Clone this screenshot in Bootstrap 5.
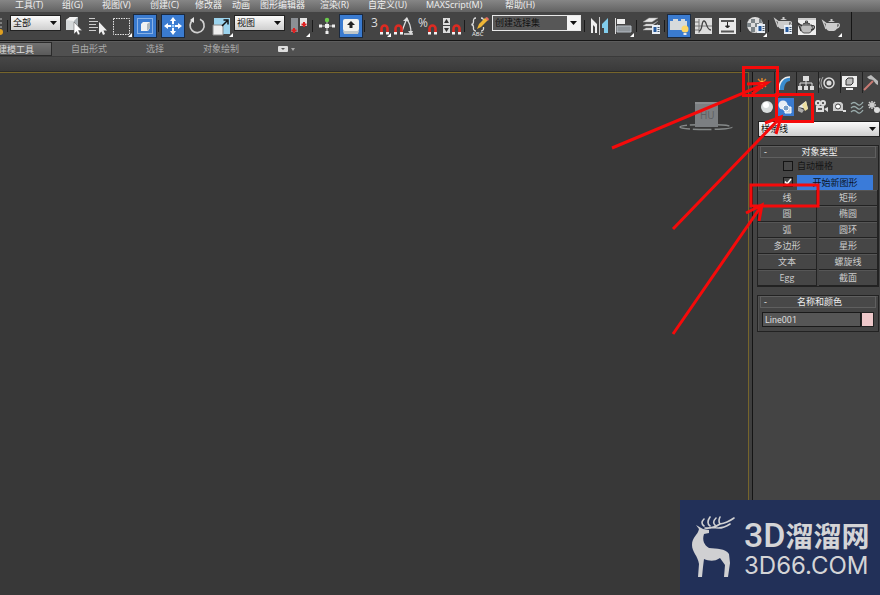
<!DOCTYPE html>
<html lang="zh-CN">
<head>
<meta charset="utf-8">
<meta name="viewport" content="width=device-width, initial-scale=1">
<title>3D</title>
<link href="https://cdn.jsdelivr.net/npm/bootstrap@5.3.0/dist/css/bootstrap.min.css" rel="stylesheet">
<script src="https://cdn.jsdelivr.net/npm/bootstrap@5.3.0/dist/js/bootstrap.bundle.min.js"></script>
<style>
body{font:9px/12px "Open Sans","Noto Sans CJK SC",sans-serif;background:#383838;color:#ddd}
a{color:inherit;text-decoration:none}
button,select,input{font:inherit;color:inherit}
.menu-bar{display:grid;grid-template-columns:47px 40px 48px 45px 37px 28px 60px 48px 58px 79px 1fr;height:12px;padding-left:15px;background:linear-gradient(#868686,#626262);color:#f0f0f0;white-space:nowrap}
.menu-bar a{line-height:10px;height:12px}
.tool-bar{height:29px;background:#444;border-bottom:1px solid #161616;overflow:hidden}
.tool-inner{width:852px;border-right:1px solid #161616;height:28px}
.tool{width:24px;height:24px;padding:0;border:0;background:none;flex:none;display:block}
.tool svg,.ptab svg,.cat svg{display:block}
.tool.on{background:#3a7bd0;box-shadow:inset 0 0 0 1px #1b2a40}
.vsep{width:4px;height:12px;flex:none;background:linear-gradient(90deg,transparent 1px,#1b1b1b 1px,#1b1b1b 2px,transparent 2px)}
.edge{width:6px;height:24px;flex:none}
.pick{appearance:none;height:16px;padding:0 0 0 2px;border:1px solid #222;border-radius:0;color:#111;line-height:12px;background:url("data:image/svg+xml,%3Csvg xmlns='http://www.w3.org/2000/svg' width='7' height='4'%3E%3Cpath d='M0 0h7L3.500 4z' fill='%23111'/%3E%3C/svg%3E") no-repeat right 3px center,linear-gradient(#fafafa,#cfcfcf)}
.tool-inner .pick{width:51px;margin:0 2px 7px 1px;flex:none}
.tool-inner .first{margin:0 0 7px}
.tool-inner .sets{width:89px;border:1px solid #e8e8e8;background:url("data:image/svg+xml,%3Csvg xmlns='http://www.w3.org/2000/svg' width='7' height='4'%3E%3Cpath d='M0 0h7L3.500 4z' fill='%23111'/%3E%3C/svg%3E") no-repeat right 3px center,linear-gradient(90deg,#575757 74px,#f4f4f4 74px)}
.ribbon{height:16px;background:#505050;border-top:1px solid #5c5c5c;border-bottom:1px solid #3a3a3a;color:#aaa;white-space:nowrap}
.ribbon a{width:66px;text-align:center;line-height:14px}
.ribbon .current{width:52px;background:linear-gradient(#727272,#5a5a5a);border:1px solid #2a2a2a;border-left:0;color:#ddd;text-align:left;overflow:hidden;display:flex;justify-content:flex-end;padding-right:17px;line-height:13px}
.ribbon-foot{height:15px;background:linear-gradient(#474747,#3a3a3a);border-bottom:1px solid #2b2b2b}
.viewport{border:1px solid #76652b;border-width:1px 1px 0 0;background:#383838;padding:28px 14px 0 0}
.panel{width:128px;background:#444;border-left:1px solid #151515;margin-left:3px;box-shadow:-3px 0 #3f3f3f;padding-left:4px}
.ptabs{margin-left:-4px}
.ptab{width:22px;height:21px;padding:0;border:0;border-right:1px solid #222;background:none;flex:none}
.cat{width:18px;height:18px;padding:0;border:0;background:none;flex:none}
.cat.on{background:#3a7bd0}
.cats{margin:5px 0 0 1px;overflow:hidden}
.kind{width:122px;height:16px;margin:5px 0 0 1px;display:block}
.rollup{border:1px solid #222;box-shadow:inset 1px 1px #515151;margin-right:1px}
.rollup-head{height:12px;width:calc(100% - 4px);margin:0 2px;border:1px solid #5f5f5f;background:#484848;color:#eee;padding:0 3px;line-height:10px;display:flex}
.rollup-head b{flex:1;font-weight:400;text-align:center}
.tick{appearance:none;width:10px;height:10px;margin:0;border:1px solid #141414;background:#484848;flex:none}
.tick:checked{background:#484848 url("data:image/svg+xml,%3Csvg xmlns='http://www.w3.org/2000/svg' width='8' height='8'%3E%3Cpath d='M1 3.500L3 6L7 1' fill='none' stroke='%23fff' stroke-width='1.600'/%3E%3C/svg%3E") no-repeat center}
.opt{height:16px;padding-left:25px;gap:4px;color:#151515}
.start{background:#3a7bd9;border:0;padding:0;width:76px;height:15px;color:#0b1424;line-height:15px}
.shape-grid{display:grid;grid-template-columns:1fr 1fr;column-gap:2px}
.shape-grid button{height:16px;padding:0;border:1px solid #222;border-width:0 1px 1px 0;background:#464646;box-shadow:inset 0 1px #565656;color:#ccc;line-height:14px}
.obj-name{width:99px;height:15px;padding:0 2px;border:1px solid #1a1a1a;background:#565656;color:#ddd;font-family:Roboto,sans-serif}
.swatch{width:13px;height:15px;padding:0;border:1px solid #222;background:#eec8ca}
.cube{width:56px}
.marks{position:absolute;right:0;top:0;pointer-events:none}
.brand{position:absolute;right:0;bottom:0;background:#223058;color:#d4d4d6;padding:16px 8px 17px 12px;white-space:nowrap;gap:6px;width:200px}
.brand-top{font:500 34px/38px Roboto,sans-serif}
.brand-top span{font:700 28px/38px "Noto Sans CJK SC",sans-serif}
.brand-low{font:24px/24px Inter,sans-serif}
</style>
</head>
<body class="vh-100 overflow-hidden position-relative d-flex flex-column">
<nav class="menu-bar flex-shrink-0">
<a href="#">工具(T)</a><a href="#">组(G)</a><a href="#">视图(V)</a><a href="#">创建(C)</a><a href="#">修改器</a><a href="#">动画</a><a href="#">图形编辑器</a><a href="#">渲染(R)</a><a href="#">自定义(U)</a><a href="#">MAXScript(M)</a><a href="#">帮助(H)</a>
</nav>
<svg width="0" height="0" class="position-absolute" aria-hidden="true"><defs>
<g id="magnet"><path d="M1.500 10V4.500a3 3 0 0 1 6 0V10" fill="none" stroke="#dc2b22" stroke-width="2.600"/><path d="M0 8h3v2.500H0zM6 8h3v2.500H6z" fill="#f2f2f2"/></g>
<g id="pot"><path d="M4 5c-1 4 0 7 3 8h5c3-1 4-4 3-8z"/><path d="M5 6L1 3l3 8M14 6c5-2 4 4 0 4" fill="none" stroke="currentColor" stroke-width="1.300"/><path d="M6 4q3.500-3 7 0zM8.500 1h2v2h-2z"/></g>
<g id="sheet"><path d="M0 0h8v9H0z" fill="#e8eef5"/><path d="M1.500 2h3v5h-3z" fill="#24589b"/><path d="M5.500 2.500h2M5.500 4.500h2M5.500 6.500h2" stroke="#456"/></g>
</defs></svg>
<div class="tool-bar flex-shrink-0">
<div class="tool-inner d-flex align-items-center">
<svg class="edge" viewBox="0 0 6 24"><path d="M0 5h2M0 9h2M0 13h2" stroke="#bbb"/><circle cx="0" cy="18" r="3" fill="#e0a020"/></svg>
<i class="vsep"></i>
<select class="pick first" aria-label="选择过滤器"><option>全部</option></select>
<button class="tool" aria-label="选择对象"><svg viewBox="0 0 24 24"><path d="M5 6l4-3h8v9l-4 4H5z" fill="#d5d9da"/><path d="M5 6l4-3h8l-4 4z" fill="#f4f4f4"/><path d="M13 7l4-4v9l-4 4z" fill="#aab1b5"/><path d="M13 8v12l2.500-2.500L17 21l2-1-1.500-3.500H21z" fill="#fff" stroke="#555" stroke-width=".5"/></svg></button>
<button class="tool" aria-label="按名称选择"><svg viewBox="0 0 24 24"><path d="M4 4.500h6M4 7.500h9M4 10.500h7M4 13.500h9M4 16.500h7" stroke="#ccc"/><path d="M14 8v12l2.500-2.500L18 21l2-1-1.500-3.500H22z" fill="#eee"/></svg></button>
<button class="tool" aria-label="矩形选择"><svg viewBox="0 0 24 24"><path d="M4.500 4.500h16v16h-16z" fill="none" stroke="#e5e5e5" stroke-dasharray="1.500 1"/><path d="M23 19v4h-4z" fill="#fff"/></svg></button>
<button class="tool on" aria-label="窗口交叉"><svg viewBox="0 0 24 24"><path d="M4.500 4.500h15v15h-15z" fill="none" stroke="#d9ebff" stroke-dasharray="1 1"/><path d="M8 10l2-2h7v6l-2 3H8z" fill="#f0f2f2"/><path d="M14 10l3-2v6l-3 3z" fill="#afb8bd"/></svg></button>
<i class="vsep"></i>
<button class="tool on" aria-label="移动"><svg viewBox="0 0 24 24"><path d="M12 3l3 4h-2v3h-2V7H9zM12 21l3-4h-2v-3h-2v3H9zM3 12l4-3v2h3v2H7v2zM21 12l-4-3v2h-3v2h3v2z" fill="#fff"/><circle cx="12" cy="12" r="1.500" fill="#9fd0ff"/></svg></button>
<button class="tool" aria-label="旋转"><svg viewBox="0 0 24 24"><path d="M8 6a7 7 0 1 0 7-.7" fill="none" stroke="#d0d0d0" stroke-width="1.700"/><path d="M9 3v6L5 6z" fill="#e5e5e5"/></svg></button>
<button class="tool" aria-label="缩放"><svg viewBox="0 0 24 24"><path d="M5 4h16v16H5z" fill="#9bd3ed"/><path d="M4 11h10v10H4z" fill="#eee" stroke="#888"/><path d="M13 12l5-5M14.500 6H19v4.500" fill="none" stroke="#111" stroke-width="1.500"/><path d="M24 19v4h-4z" fill="#fff"/></svg></button>
<select class="pick" aria-label="参考坐标系"><option>视图</option></select>
<button class="tool" aria-label="轴心"><svg viewBox="0 0 24 24"><path d="M4 4h7v14H4z" fill="#8c9095"/><path d="M13 4h7v8h-7z" fill="#e5e5e5"/><path d="M7 14v5M4.500 16.500h5M17 8v5M14.500 10.500h5" stroke="#d22" stroke-width="2"/><path d="M23 19v4h-4z" fill="#fff"/></svg></button>
<i class="vsep"></i>
<button class="tool" aria-label="操纵"><svg viewBox="0 0 24 24"><path d="M12 6v13M5 12h14" stroke="#ccc"/><path d="M10 10h4v4h-4zM4 10.500h3v3H4zM17 10.500h3v3h-3zM10.500 17h3v3h-3z" fill="#eee"/><circle cx="12" cy="6" r="2.200" fill="#6ccc4c"/></svg></button>
<button class="tool on" aria-label="快捷键覆盖"><svg viewBox="0 0 24 24"><path d="M4 17l2-2h12l2 2-1 3H5z" fill="#bfc6c8"/><rect x="4" y="5" width="16" height="12" rx="2" fill="#f2f2ee"/><path d="M12 7l4 4h-2.500v3h-3v-3H8z" fill="#222"/></svg></button>
<i class="vsep"></i>
<button class="tool" aria-label="捕捉开关"><svg viewBox="0 0 24 24"><text x="4" y="13" font-size="12" fill="#ddd">3</text><use href="#magnet" x="13" y="10"/><path d="M24 19v4h-4z" fill="#fff"/></svg></button>
<button class="tool" aria-label="角度捕捉"><svg viewBox="0 0 24 24"><path d="M11 17L16 4M13 20h9M15 5q5 4 5 14" fill="none" stroke="#ddd" stroke-width="1.300"/><path d="M12 7l4-4 2 4zM17 17h5l-2 4z" fill="#ddd"/><use href="#magnet" x="3" y="10"/></svg></button>
<button class="tool" aria-label="百分比捕捉"><svg viewBox="0 0 24 24"><text x="3" y="13" font-size="12" fill="#ddd">%</text><use href="#magnet" x="13" y="10"/></svg></button>
<button class="tool" aria-label="微调器捕捉"><svg viewBox="0 0 24 24"><path d="M4 4h7v7H4zM4 12h7v7H4z" fill="#ddd"/><path d="M5 9l2.500-4L10 9zM5 14h5l-2.500 4z" fill="#333"/><use href="#magnet" x="13" y="10"/></svg></button>
<i class="vsep"></i>
<button class="tool" aria-label="编辑命名选择集"><svg viewBox="0 0 24 24"><path d="M9 4Q6 4 6.500 8q0 2-2 2.500 2 .5 2 2.500-.5 4 2.500 4M14 4q3 0 2.500 4M14 17q3 0 2.500-4" fill="none" stroke="#ddd" stroke-width="1.300"/><path d="M10 15l2-5 6-6 3 2-7 7z" fill="#efb636"/><path d="M18 4l2-1 2 2-1 2z" fill="#e46b60"/><text x="5" y="22" font-size="6" fill="#eee">ABC</text></svg></button>
<select class="pick sets" aria-label="命名选择集"><option>创建选择集</option></select>
<i class="vsep"></i>
<button class="tool" aria-label="镜像"><svg viewBox="0 0 24 24"><path d="M4 4l6 6v9H8v-6l-2-2v8H4z" fill="#eee"/><path d="M12.500 3v18" stroke="#ccc"/><path d="M21 4l-6 6v4h2v5h4z" fill="#81cdec"/></svg></button>
<button class="tool" aria-label="对齐"><svg viewBox="0 0 24 24"><path d="M4.500 4v16" stroke="#ddd"/><path d="M6 5h8v5H6z" fill="#eee"/><path d="M6 12h14v6H6z" fill="#8e9499" stroke="#b6bdc4"/><path d="M23 19v4h-4z" fill="#fff"/></svg></button>
<i class="vsep"></i>
<button class="tool" aria-label="层管理器"><svg viewBox="0 0 24 24"><path d="M4 8l6-4h9l-6 4zM4 12l3-2h7l5-3-6 5zM4 16l3-2h7l5-4-6 6z" fill="#e8e8e8" stroke="#999" stroke-width=".5"/><use href="#sheet" x="13" y="11"/></svg></button>
<i class="vsep"></i>
<button class="tool on" aria-label="石墨工具"><svg viewBox="0 0 24 24"><path d="M3 7h3V5h5v2h3V5h4v2h2v9H3z" fill="#d6dadc"/><circle cx="18" cy="15" r="3.500" fill="#ffd765"/><path d="M16.500 19h3v2h-3z" fill="#eee"/></svg></button>
<button class="tool" aria-label="曲线编辑器"><svg viewBox="0 0 24 24"><path d="M4 4h17v16H4z" fill="#dcdcdc"/><path d="M8 5v14M4 8h4M4 12h17M4 16h4" stroke="#777"/><path d="M8 17c4 0 2-10 5-10s2 9 7 9" fill="none" stroke="#444" stroke-width="1.300"/></svg></button>
<button class="tool" aria-label="图解视图"><svg viewBox="0 0 24 24"><path d="M4 4h17v16H4z" fill="#e9e9e9"/><path d="M6 7h13M6 17.500h13" stroke="#555" stroke-width="2"/><path d="M12.500 8v4M10.500 12h4l-2 2z" stroke="#222" fill="#222"/></svg></button>
<i class="vsep"></i>
<button class="tool" aria-label="材质编辑器"><svg viewBox="0 0 24 24"><circle cx="12" cy="11" r="8" fill="#ddd"/><path d="M8 5h4v4H8zM12 9h4v4h-4zM16 5h2l1 4h-3zM4 9h4v4H4zM8 13h4v5H8z" fill="#7c8488"/><use href="#sheet" x="14" y="10"/><path d="M24 19v4h-4z" fill="#fff"/></svg></button>
<i class="vsep"></i>
<button class="tool" aria-label="渲染设置"><svg viewBox="0 0 24 24" fill="#ccc" color="#ccc"><use href="#pot" x="3" y="2"/><use href="#sheet" x="13" y="11"/></svg></button>
<button class="tool" aria-label="渲染帧窗口"><svg viewBox="0 0 24 24" fill="#bbb" color="#333"><path d="M3 4h18v17H3z" fill="#eee"/><path d="M3 4h18v2H3z" fill="#ccc"/><use href="#pot" x="2" y="6" stroke="#333" stroke-width=".8"/></svg></button>
<button class="tool" aria-label="渲染产品"><svg viewBox="0 0 24 24" fill="#ccc" color="#ccc"><use href="#pot" x="3" y="4"/><path d="M23 19v4h-4z" fill="#fff"/></svg></button>
</div></div>
<nav class="ribbon d-flex flex-shrink-0">
<a class="current" href="#"><span>建模工具</span></a>
<a class="ms-1" href="#">自由形式</a><a href="#">选择</a><a href="#">对象绘制</a>
<svg class="ms-4" width="20" height="14" viewBox="0 0 20 14"><rect x="0" y="4" width="10" height="6" rx="1" fill="#ddd"/><path d="M3 6h4L5 8z" fill="#555"/><path d="M13 6h4l-2 3z" fill="#aaa"/></svg>
</nav>
<div class="ribbon-foot flex-shrink-0"></div>
<div class="d-flex flex-grow-1">
<main class="viewport flex-grow-1 d-flex justify-content-end align-items-start">
<svg class="cube" height="32" viewBox="0 0 56 32"><ellipse cx="28" cy="26" rx="26" ry="2.500" fill="none" stroke="#858989" stroke-width="1.500" stroke-dasharray="18 3"/><path d="M17 1h23v25H17z" fill="#7c7f82"/><path d="M17 1h23v2H17z" fill="#8b8d8f"/><text x="22" y="18" font-size="10" fill="#5d6063">HU</text></svg>
</main>
<aside class="panel flex-shrink-0">
<div class="ptabs d-flex overflow-hidden">
<button class="ptab" aria-label="创建"><svg width="21" height="20" viewBox="0 0 21 20"><path d="M9 5v11M4 10h10M5 6l8 8M13 6l-8 8" stroke="#d9822b" stroke-width="1.500"/><circle cx="9" cy="10" r="2" fill="#ffc14b"/></svg></button>
<button class="ptab" aria-label="修改"><svg width="21" height="20" viewBox="0 0 21 20"><path d="M4 17C4 8 9 4 15 4v4c-4 0-6 4-6 9z" fill="#398ccf"/><path d="M4 17C4 8 9 4 15 4" fill="none" stroke="#eee" stroke-width="1.500"/></svg></button>
<button class="ptab" aria-label="层次"><svg width="21" height="20" viewBox="0 0 21 20"><path d="M6 3h6v5H6zM1 13h4v4H1zM7 13h4v4H7zM13 13h4v4h-4z" fill="#ddd"/><path d="M9 8v5M3 13v-3h12v3" fill="none" stroke="#ddd"/></svg></button>
<button class="ptab" aria-label="运动"><svg width="21" height="20" viewBox="0 0 21 20"><circle cx="10" cy="10" r="5" fill="none" stroke="#ddd" stroke-width="1.500"/><circle cx="10" cy="10" r="2.500" fill="#ddd"/><path d="M4 4q-4 6 0 12M1 5q-3 5 0 10" fill="none" stroke="#aaa"/></svg></button>
<button class="ptab" aria-label="显示"><svg width="21" height="20" viewBox="0 0 21 20"><path d="M1 3h15v11H1zM5 15h7v2H5z" fill="#eee"/><path d="M5 7l2-2h5v5l-2 2H5z" fill="#bbb" stroke="#333"/></svg></button>
<button class="ptab border-0" aria-label="实用程序"><svg width="21" height="20" viewBox="0 0 21 20"><path d="M1 17L10 8" stroke="#c97a73" stroke-width="2"/><path d="M4 4l4-2 7 6v4l-2-1-3-4-4-1z" fill="#bbb"/></svg></button>
</div>
<div class="cats d-flex">
<button class="cat" aria-label="几何体"><svg width="18" height="18" viewBox="0 0 18 18"><circle cx="9" cy="9" r="6" fill="#d9dddd"/><circle cx="8" cy="7" r="3" fill="#fff"/></svg></button>
<button class="cat on" aria-label="图形"><svg width="18" height="18" viewBox="0 0 18 18"><circle cx="7" cy="7" r="4.500" fill="#e8eef5"/><path d="M9 9h6v6H9z" fill="#cad5e0" stroke="#fff"/><circle cx="10" cy="10" r="3" fill="#7ba0c8" stroke="#fff"/></svg></button>
<button class="cat" aria-label="灯光"><svg width="18" height="18" viewBox="0 0 18 18"><path d="M4 9l8-6 2 8z" fill="#eee"/><path d="M12 3l2 8-3 2-3-6z" fill="#eee0a0"/><path d="M4 9l6 3-2 3-4-2z" fill="#aaa"/></svg></button>
<button class="cat" aria-label="摄影机"><svg width="18" height="18" viewBox="0 0 18 18"><circle cx="6" cy="5" r="3" fill="#ddd"/><circle cx="11" cy="5" r="3" fill="#ddd"/><path d="M4 8h8v6H4zM12 11l4-2v5z" fill="#ddd"/><path d="M5 5h2M10 5h2M6 11h4" stroke="#333" stroke-width="1.500"/></svg></button>
<button class="cat" aria-label="辅助对象"><svg width="18" height="18" viewBox="0 0 18 18"><path d="M3 6l2-2h6l2 2v7H3z" fill="#ccc"/><circle cx="8" cy="8.500" r="2.500" fill="#fff" stroke="#444"/><path d="M13 12h3v2h-3z" fill="#ddd"/></svg></button>
<button class="cat" aria-label="空间扭曲"><svg width="18" height="18" viewBox="0 0 18 18"><path d="M3 6q3-3 6 0t6-2M3 10q3-3 6 0t6-2M3 14q3-3 6 0t6-2" fill="none" stroke="#9aacac" stroke-width="1.300"/></svg></button>
<button class="cat" aria-label="系统"><svg width="18" height="18" viewBox="0 0 18 18"><path d="M6 3v8M2 7h8M3 4l6 6M9 4l-6 6" stroke="#ccc" stroke-width="1.500"/><circle cx="11" cy="12" r="3" fill="#ddd"/></svg></button>
</div>
<select class="pick kind" aria-label="对象类别"><option>样条线</option></select>
<section class="rollup mt-2">
<button class="rollup-head"><span>-</span><b>对象类型</b></button>
<label class="opt d-flex align-items-center"><input type="checkbox" class="tick">自动栅格</label>
<div class="opt d-flex align-items-center"><input type="checkbox" class="tick" checked aria-label="开始新图形"><button class="start">开始新图形</button></div>
<div class="shape-grid">
<button>线</button><button>矩形</button><button>圆</button><button>椭圆</button><button>弧</button><button>圆环</button><button>多边形</button><button>星形</button><button>文本</button><button>螺旋线</button><button>Egg</button><button>截面</button>
</div></section>
<section class="rollup mt-2">
<button class="rollup-head"><span>-</span><b>名称和颜色</b></button>
<div class="d-flex px-1 pt-1 pb-1 justify-content-between"><input class="obj-name" aria-label="名称" value="Line001"><button class="swatch" aria-label="颜色"></button></div>
</section>
</aside>
</div>
<div class="brand d-flex align-items-center">
<svg width="46" height="62" viewBox="0 0 46 62" class="flex-shrink-0"><path d="M4 9L11 13 17 14 17 17 12 18C10 24 12 29 17 32C25 33 33 32 37 38L38 47 36 61H32L33 49 28 42C22 46 17 45 12 43L11 51 10 61H6L7 48C6 40 0 36 0 29C0 21 6 19 7 13Z" fill="#d0d0d2"/><path d="M13 12Q20 13 28 8Q35 7 42 2M12 10Q8 7 12 3M18 10Q14 7 18 1M23 9Q20 6 24 2M28 8Q26 5 28 1M21 11Q29 14 38 8" fill="none" stroke="#d0d0d2" stroke-width="1.600" stroke-linecap="round"/></svg>
<div><div class="brand-top">3D<span>溜溜网</span></div><div class="brand-low">3D66.COM</div></div>
</div>
<svg class="marks" width="280" height="350" viewBox="600 0 280 350" fill="none" stroke="#f50a0a" stroke-width="3" aria-hidden="true">
<rect x="743.500" y="67.500" width="34" height="28"/><rect x="776.500" y="94.500" width="36" height="27"/><rect x="751" y="185" width="67" height="21"/>
<path d="M612 148L767 83M747 84L767 83 752 94M673 229L781 117M765 123L781 117 776 134M673 334L762 205M746 213L762 205 759 221"/>
</svg>
</body>
</html>
